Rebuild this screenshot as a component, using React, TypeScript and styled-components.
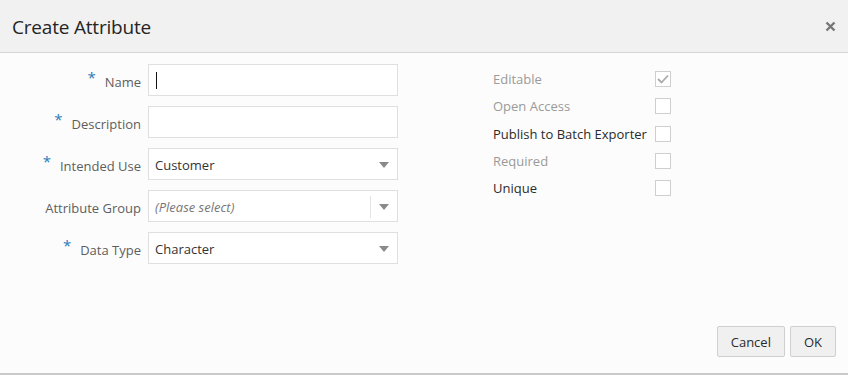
import React from "react";
import styled, { createGlobalStyle } from "styled-components";

const Global = createGlobalStyle`
  html, body { margin: 0; padding: 0; background: #fcfcfc; }
  body { font-family: "Open Sans", "Noto Sans", sans-serif; }
  * { box-sizing: border-box; }
`;

const Dialog = styled.div`
  width: 848px;
  height: 375px;
  display: flex;
  flex-direction: column;
  background: #fcfcfc;
  border-bottom: 2px solid #c9c9c9;
`;

const Header = styled.div`
  height: 53px;
  flex: none;
  background: #f1f1f1;
  border-bottom: 1px solid #d4d4d4;
  display: flex;
  align-items: center;
  justify-content: space-between;
  padding: 1px 11px 0 12px;
`;

const Title = styled.h1`
  margin: 0;
  font-size: 19px;
  font-weight: 400;
  color: #252525;
  letter-spacing: -0.2px;
`;

const Close = styled.button`
  border: 0;
  background: transparent;
  padding: 0;
  width: 14px;
  height: 14px;
  display: flex;
  align-items: center;
  justify-content: center;
  cursor: pointer;
`;

const Body = styled.div`
  flex: 1;
  display: flex;
  padding: 11px 0 0 0;
`;

const LeftCol = styled.div`
  display: grid;
  grid-template-columns: 141px 250px;
  column-gap: 7px;
  row-gap: 10px;
  align-content: start;
`;

const Label = styled.label`
  display: flex;
  align-items: center;
  justify-content: flex-end;
  font-size: 13px;
  color: #5e5e5e;
  height: 32px;
  padding-top: 3px;
`;

const Star = styled.span`
  color: #2a7ab8;
  font-size: 15px;
  margin-right: 9px;
  align-self: center;
  margin-top: -10px;
`;

const Field = styled.div`
  height: 32px;
  border: 1px solid #dfdfdf;
  background: #fff;
  display: flex;
  align-items: center;
  font-size: 13px;
  color: #333;
  padding-top: 1px;
`;

const FieldText = styled.span<{ $placeholder?: boolean }>`
  flex: 1;
  padding-left: 6px;
  font-style: ${(p) => (p.$placeholder ? "italic" : "normal")};
  color: ${(p) => (p.$placeholder ? "#777" : "#333")};
`;

const Caret = styled.span`
  width: 1px;
  height: 17px;
  background: #111;
  margin-left: 7px;
`;

const Arrow = styled.span<{ $divider?: boolean }>`
  width: 27px;
  display: flex;
  align-items: center;
  justify-content: center;
  border-left: ${(p) => (p.$divider ? "1px solid #e3e3e3" : "none")};
  height: ${(p) => (p.$divider ? "22px" : "100%")};
`;

const RightCol = styled.div`
  margin-left: 95px;
  display: grid;
  grid-template-columns: 162px 16px;
  row-gap: 11.3px;
  align-content: start;
  padding-top: 7px;
`;

const CheckLabel = styled.span<{ $disabled?: boolean }>`
  font-size: 13px;
  color: ${(p) => (p.$disabled ? "#9a9a9a" : "#2b2b2b")};
  height: 16px;
  display: flex;
  align-items: center;
`;

const Box = styled.span`
  width: 16px;
  height: 16px;
  border: 1px solid #cfcfcf;
  background: #fff;
  display: flex;
  align-items: center;
  justify-content: center;
`;

const Footer = styled.div`
  display: flex;
  justify-content: flex-end;
  gap: 5px;
  padding: 0 12px 16px 0;
`;

const Button = styled.button`
  height: 31px;
  padding: 0 13px;
  border: 1px solid #cfcfcf;
  border-radius: 2px;
  background: #f0f0f0;
  font-family: inherit;
  font-size: 13px;
  color: #2b2b2b;
`;

const Main = styled.div`
  flex: 1;
  display: flex;
  flex-direction: column;
  justify-content: space-between;
`;

const DownArrow = () => (
  <svg width="10" height="6" viewBox="0 0 10 6">
    <path d="M0 0 L10 0 L5 6 Z" fill="#8a8a8a" />
  </svg>
);

const fields: { label: string; required: boolean; kind: "text" | "select"; value?: string; caret?: boolean; placeholder?: boolean; divider?: boolean }[] = [
  { label: "Name", required: true, kind: "text", caret: true },
  { label: "Description", required: true, kind: "text" },
  { label: "Intended Use", required: true, kind: "select", value: "Customer" },
  { label: "Attribute Group", required: false, kind: "select", value: "(Please select)", placeholder: true, divider: true },
  { label: "Data Type", required: true, kind: "select", value: "Character" },
];

const checks = [
  { label: "Editable", disabled: true, checked: true },
  { label: "Open Access", disabled: true, checked: false },
  { label: "Publish to Batch Exporter", disabled: false, checked: false },
  { label: "Required", disabled: true, checked: false },
  { label: "Unique", disabled: false, checked: false },
];

export default function App() {
  return (
    <>
      <Global />
      <Dialog>
        <Header>
          <Title>Create Attribute</Title>
          <Close aria-label="Close">
            <svg width="11" height="11" viewBox="0 0 11 11">
              <path d="M1.5 1.5 L9.5 9.5 M9.5 1.5 L1.5 9.5" stroke="#777" strokeWidth="2.4" />
            </svg>
          </Close>
        </Header>
        <Main>
          <Body>
            <LeftCol>
              {fields.map((f) => (
                <React.Fragment key={f.label}>
                  <Label>
                    {f.required && <Star>*</Star>}
                    {f.label}
                  </Label>
                  <Field>
                    {f.caret && <Caret />}
                    <FieldText $placeholder={f.placeholder}>{f.value ?? ""}</FieldText>
                    {f.kind === "select" && (
                      <Arrow $divider={f.divider}>
                        <DownArrow />
                      </Arrow>
                    )}
                  </Field>
                </React.Fragment>
              ))}
            </LeftCol>
            <RightCol>
              {checks.map((c) => (
                <React.Fragment key={c.label}>
                  <CheckLabel $disabled={c.disabled}>{c.label}</CheckLabel>
                  <Box>
                    {c.checked && (
                      <svg width="12" height="10" viewBox="0 0 12 10">
                        <path d="M1 5 L4.5 8.5 L11 1.5" stroke="#aaa" strokeWidth="1.8" fill="none" />
                      </svg>
                    )}
                  </Box>
                </React.Fragment>
              ))}
            </RightCol>
          </Body>
          <Footer>
            <Button>Cancel</Button>
            <Button>OK</Button>
          </Footer>
        </Main>
      </Dialog>
    </>
  );
}
